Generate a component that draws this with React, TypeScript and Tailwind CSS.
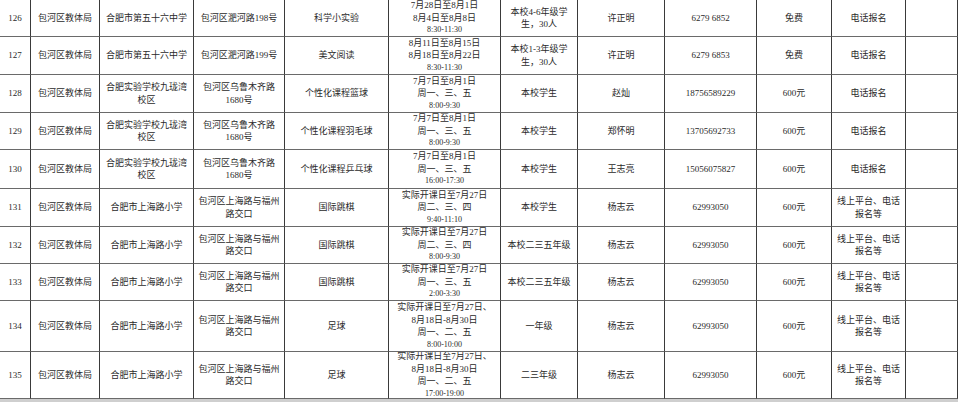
const ROW_H = [
  "h-[37px]",
  "h-[38px]",
  "h-[38px]",
  "h-[37px]",
  "h-[39px]",
  "h-[38px]",
  "h-[37px]",
  "h-[37px]",
  "h-[51px]",
  "h-[47px]",
];

type Row = {
  no: string;
  school: string[];
  addr: string[];
  course: string;
  dates: string[];
  time: string;
  target: string[];
  teacher: string;
  phone: string;
  fee: string;
  signup: string[];
};

const baseHe = ["包河区上海路与福州", "路交口"];
const onlineSignup = ["线上平台、电话", "报名等"];
const jiulong = ["合肥实验学校九珑湾", "校区"];
const wulumuqi = ["包河区乌鲁木齐路", "1680号"];

const rows: Row[] = [
  {
    no: "126",
    school: ["合肥市第五十六中学"],
    addr: ["包河区淝河路198号"],
    course: "科学小实验",
    dates: ["7月28日至8月1日", "8月4日至8月8日"],
    time: "8:30-11:30",
    target: ["本校4-6年级学", "生，30人"],
    teacher: "许正明",
    phone: "6279 6852",
    fee: "免费",
    signup: ["电话报名"],
  },
  {
    no: "127",
    school: ["合肥市第五十六中学"],
    addr: ["包河区淝河路199号"],
    course: "美文阅读",
    dates: ["8月11日至8月15日", "8月18日至8月22日"],
    time: "8:30-11:30",
    target: ["本校1-3年级学", "生，30人"],
    teacher: "许正明",
    phone: "6279 6853",
    fee: "免费",
    signup: ["电话报名"],
  },
  {
    no: "128",
    school: jiulong,
    addr: wulumuqi,
    course: "个性化课程篮球",
    dates: ["7月7日至8月1日", "周一、三、五"],
    time: "8:00-9:30",
    target: ["本校学生"],
    teacher: "赵灿",
    phone: "18756589229",
    fee: "600元",
    signup: ["电话报名"],
  },
  {
    no: "129",
    school: jiulong,
    addr: wulumuqi,
    course: "个性化课程羽毛球",
    dates: ["7月7日至8月1日", "周一、三、五"],
    time: "8:00-9:30",
    target: ["本校学生"],
    teacher: "郑怀明",
    phone: "13705692733",
    fee: "600元",
    signup: ["电话报名"],
  },
  {
    no: "130",
    school: jiulong,
    addr: wulumuqi,
    course: "个性化课程乒乓球",
    dates: ["7月7日至8月1日", "周一、三、五"],
    time: "16:00-17:30",
    target: ["本校学生"],
    teacher: "王志亮",
    phone: "15056075827",
    fee: "600元",
    signup: ["电话报名"],
  },
  {
    no: "131",
    school: ["合肥市上海路小学"],
    addr: baseHe,
    course: "国际跳棋",
    dates: ["实际开课日至7月27日", "周二、三、四"],
    time: "9:40-11:10",
    target: ["本校学生"],
    teacher: "杨志云",
    phone: "62993050",
    fee: "600元",
    signup: onlineSignup,
  },
  {
    no: "132",
    school: ["合肥市上海路小学"],
    addr: baseHe,
    course: "国际跳棋",
    dates: ["实际开课日至7月27日", "周二、三、四"],
    time: "8:00-9:30",
    target: ["本校二三五年级"],
    teacher: "杨志云",
    phone: "62993050",
    fee: "600元",
    signup: onlineSignup,
  },
  {
    no: "133",
    school: ["合肥市上海路小学"],
    addr: baseHe,
    course: "国际跳棋",
    dates: ["实际开课日至7月27日", "周一、三、五"],
    time: "2:00-3:30",
    target: ["本校二三五年级"],
    teacher: "杨志云",
    phone: "62993050",
    fee: "600元",
    signup: onlineSignup,
  },
  {
    no: "134",
    school: ["合肥市上海路小学"],
    addr: baseHe,
    course: "足球",
    dates: ["实际开课日至7月27日、", "8月18日-8月30日", "周一、二、五"],
    time: "8:00-10:00",
    target: ["一年级"],
    teacher: "杨志云",
    phone: "62993050",
    fee: "600元",
    signup: onlineSignup,
  },
  {
    no: "135",
    school: ["合肥市上海路小学"],
    addr: baseHe,
    course: "足球",
    dates: ["实际开课日至7月27日、", "8月18日-8月30日", "周一、二、五"],
    time: "17:00-19:00",
    target: ["二三年级"],
    teacher: "杨志云",
    phone: "62993050",
    fee: "600元",
    signup: onlineSignup,
  },
];

function Cell({ h, children }: { h: string; children?: React.ReactNode }) {
  return (
    <div
      className={`${h} flex flex-col items-center justify-center border-r border-b border-r-[#3a3a3a] border-b-[#6a6a6a] text-center whitespace-nowrap overflow-hidden`}
    >
      {children}
    </div>
  );
}

function Lines({ items }: { items: string[] }) {
  return (
    <>
      {items.map((t, i) => (
        <span key={i} className="block">
          {t}
        </span>
      ))}
    </>
  );
}

export default function App() {
  return (
    <div className="w-[960px] h-[402px] bg-white overflow-hidden">
      <div
        className="grid grid-cols-[31px_69px_94px_91px_104px_112px_77px_87px_92px_75px_74px_52px] w-[958px] text-[9px] leading-[12.5px] text-[#2a2a2a]"
        style={{ fontFamily: '"Liberation Serif", "Noto Sans CJK SC", serif' }}
      >
        {rows.map((r, i) => {
          const h = ROW_H[i];
          return [
            <Cell key={`${r.no}-0`} h={h}>{r.no}</Cell>,
            <Cell key={`${r.no}-1`} h={h}>包河区教体局</Cell>,
            <Cell key={`${r.no}-2`} h={h}><Lines items={r.school} /></Cell>,
            <Cell key={`${r.no}-3`} h={h}><Lines items={r.addr} /></Cell>,
            <Cell key={`${r.no}-4`} h={h}>{r.course}</Cell>,
            <Cell key={`${r.no}-5`} h={h}>
              <Lines items={r.dates} />
              <span className="block text-[8px]">{r.time}</span>
            </Cell>,
            <Cell key={`${r.no}-6`} h={h}><Lines items={r.target} /></Cell>,
            <Cell key={`${r.no}-7`} h={h}>{r.teacher}</Cell>,
            <Cell key={`${r.no}-8`} h={h}>{r.phone}</Cell>,
            <Cell key={`${r.no}-9`} h={h}>{r.fee}</Cell>,
            <Cell key={`${r.no}-10`} h={h}><Lines items={r.signup} /></Cell>,
            <Cell key={`${r.no}-11`} h={h} />,
          ];
        })}
      </div>
      <div className="h-[3px] w-[958px] bg-[#cfcfcf]" />
    </div>
  );
}
